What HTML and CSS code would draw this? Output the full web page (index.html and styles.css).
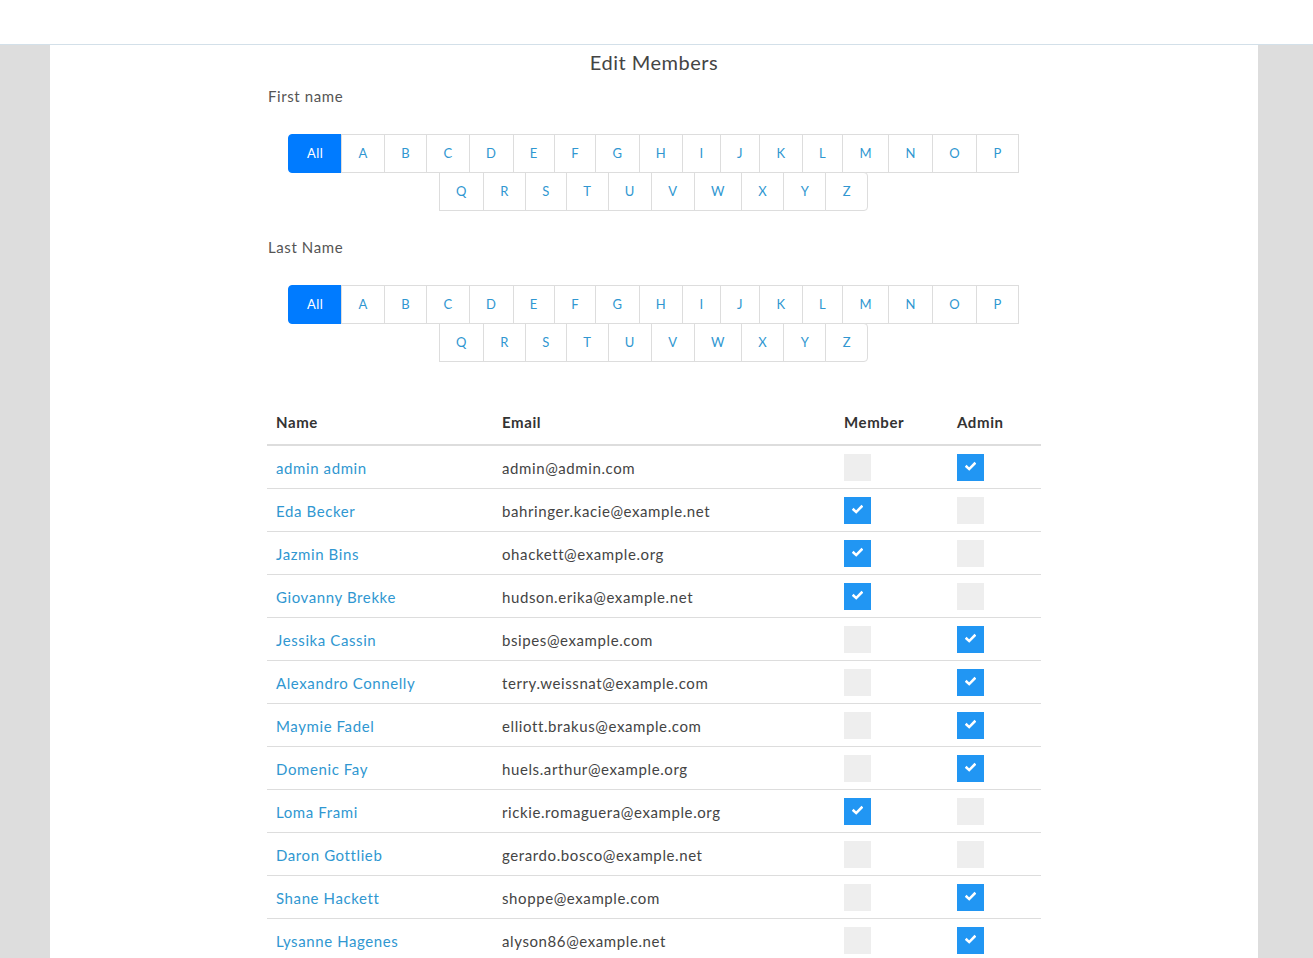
FILE: index.html
```html
<!DOCTYPE html>
<html>
<head>
<meta charset="utf-8">
<link rel="stylesheet" href="styles.css">
</head>
<body>
<div class="topbar"></div>
<div class="page">
  <div class="panel">
    <div class="content">
      <h3 class="title">Edit Members</h3>
      <div class="label">First name</div>
      <ul class="pager">
        <li class="active"><span>All</span></li>
        <li><a>A</a></li><li><a>B</a></li><li><a>C</a></li><li><a>D</a></li><li><a>E</a></li><li><a>F</a></li><li><a>G</a></li><li><a>H</a></li><li><a>I</a></li><li><a>J</a></li><li><a>K</a></li><li><a>L</a></li><li><a>M</a></li><li><a>N</a></li><li><a>O</a></li><li class="p-end"><a>P</a></li>
        <li class="break"></li>
        <li class="row2"><a>Q</a></li><li class="row2"><a>R</a></li><li class="row2"><a>S</a></li><li class="row2"><a>T</a></li><li class="row2"><a>U</a></li><li class="row2"><a>V</a></li><li class="row2"><a>W</a></li><li class="row2"><a>X</a></li><li class="row2"><a>Y</a></li><li class="row2 last"><a>Z</a></li>
      </ul>
      <div class="label label2">Last Name</div>
      <ul class="pager">
        <li class="active"><span>All</span></li>
        <li><a>A</a></li><li><a>B</a></li><li><a>C</a></li><li><a>D</a></li><li><a>E</a></li><li><a>F</a></li><li><a>G</a></li><li><a>H</a></li><li><a>I</a></li><li><a>J</a></li><li><a>K</a></li><li><a>L</a></li><li><a>M</a></li><li><a>N</a></li><li><a>O</a></li><li class="p-end"><a>P</a></li>
        <li class="break"></li>
        <li class="row2"><a>Q</a></li><li class="row2"><a>R</a></li><li class="row2"><a>S</a></li><li class="row2"><a>T</a></li><li class="row2"><a>U</a></li><li class="row2"><a>V</a></li><li class="row2"><a>W</a></li><li class="row2"><a>X</a></li><li class="row2"><a>Y</a></li><li class="row2 last"><a>Z</a></li>
      </ul>
      <table class="members">
        <thead>
          <tr><th class="c-name">Name</th><th class="c-email">Email</th><th class="c-mem">Member</th><th class="c-adm">Admin</th></tr>
        </thead>
        <tbody>
          <tr><td><a>admin admin</a></td><td>admin@admin.com</td><td><span class="cb"></span></td><td><span class="cb on"><svg viewBox="0 0 12 12"><path d="M1.8 6.2 L4.6 8.8 L10.4 2.8" /></svg></span></td></tr>
          <tr><td><a>Eda Becker</a></td><td>bahringer.kacie@example.net</td><td><span class="cb on"><svg viewBox="0 0 12 12"><path d="M1.8 6.2 L4.6 8.8 L10.4 2.8" /></svg></span></td><td><span class="cb"></span></td></tr>
          <tr><td><a>Jazmin Bins</a></td><td>ohackett@example.org</td><td><span class="cb on"><svg viewBox="0 0 12 12"><path d="M1.8 6.2 L4.6 8.8 L10.4 2.8" /></svg></span></td><td><span class="cb"></span></td></tr>
          <tr><td><a>Giovanny Brekke</a></td><td>hudson.erika@example.net</td><td><span class="cb on"><svg viewBox="0 0 12 12"><path d="M1.8 6.2 L4.6 8.8 L10.4 2.8" /></svg></span></td><td><span class="cb"></span></td></tr>
          <tr><td><a>Jessika Cassin</a></td><td>bsipes@example.com</td><td><span class="cb"></span></td><td><span class="cb on"><svg viewBox="0 0 12 12"><path d="M1.8 6.2 L4.6 8.8 L10.4 2.8" /></svg></span></td></tr>
          <tr><td><a>Alexandro Connelly</a></td><td>terry.weissnat@example.com</td><td><span class="cb"></span></td><td><span class="cb on"><svg viewBox="0 0 12 12"><path d="M1.8 6.2 L4.6 8.8 L10.4 2.8" /></svg></span></td></tr>
          <tr><td><a>Maymie Fadel</a></td><td>elliott.brakus@example.com</td><td><span class="cb"></span></td><td><span class="cb on"><svg viewBox="0 0 12 12"><path d="M1.8 6.2 L4.6 8.8 L10.4 2.8" /></svg></span></td></tr>
          <tr><td><a>Domenic Fay</a></td><td>huels.arthur@example.org</td><td><span class="cb"></span></td><td><span class="cb on"><svg viewBox="0 0 12 12"><path d="M1.8 6.2 L4.6 8.8 L10.4 2.8" /></svg></span></td></tr>
          <tr><td><a>Loma Frami</a></td><td>rickie.romaguera@example.org</td><td><span class="cb on"><svg viewBox="0 0 12 12"><path d="M1.8 6.2 L4.6 8.8 L10.4 2.8" /></svg></span></td><td><span class="cb"></span></td></tr>
          <tr><td><a>Daron Gottlieb</a></td><td>gerardo.bosco@example.net</td><td><span class="cb"></span></td><td><span class="cb"></span></td></tr>
          <tr><td><a>Shane Hackett</a></td><td>shoppe@example.com</td><td><span class="cb"></span></td><td><span class="cb on"><svg viewBox="0 0 12 12"><path d="M1.8 6.2 L4.6 8.8 L10.4 2.8" /></svg></span></td></tr>
          <tr><td><a>Lysanne Hagenes</a></td><td>alyson86@example.net</td><td><span class="cb"></span></td><td><span class="cb on"><svg viewBox="0 0 12 12"><path d="M1.8 6.2 L4.6 8.8 L10.4 2.8" /></svg></span></td></tr>
        </tbody>
      </table>
    </div>
  </div>
</div>
</body>
</html>
```
FILE: styles.css
```css
* { box-sizing: border-box; }
html, body { margin: 0; padding: 0; }
body {
  font-family: "Lato", "Open Sans", sans-serif;
  font-size: 15px;
  line-height: 1.4;
  letter-spacing: 0.6px;
  color: #555;
  background: #dddddd;
  overflow: hidden;
  height: 958px;
}
.topbar {
  height: 45px;
  background: #fff;
  border-bottom: 1px solid #d3e0e9;
}
.page {
  padding: 0 55px 0 50px;
}
.panel {
  background: #fff;
  min-height: 913px;
}
.content {
  width: 774px;
  margin: 0 auto;
  padding-top: 5px;
}
.title {
  margin: 0;
  text-align: center;
  font-size: 20px;
  font-weight: 400;
  line-height: 24px;
  color: #444;
  letter-spacing: 0.5px;
}
.label {
  margin-top: 12px;
  padding-left: 1px;
  line-height: 21px;
  color: #555;
}
.label2 { margin-top: 26px; }
.pager {
  list-style: none;
  margin: 27px 0 0;
  padding: 0;
  display: flex;
  flex-wrap: wrap;
  justify-content: center;
  font-size: 13px;
  letter-spacing: 0.5px;
}
.pager li { margin-left: -1px; }
.pager li.break {
  flex-basis: 100%;
  height: 0;
  margin: 0;
}
.pager li a, .pager li span {
  display: block;
  height: 39px;
  line-height: 37px;
  padding: 0 16.2px;
  border: 1px solid #ddd;
  color: #3097d1;
  background: #fff;
  text-align: center;
}
.pager li.active span {
  background: #007bff;
  border-color: #007bff;
  color: #fff;
  border-radius: 4px 0 0 4px;
  padding: 0 18px;
}
.pager li.row2 { margin-top: -1px; }
.pager li.last a { border-radius: 0 4px 4px 0; }
.members {
  width: 774px;
  margin-top: 44px;
  border-collapse: collapse;
}
.members th {
  text-align: left;
  font-weight: 700;
  color: #333;
  padding: 6px 9px 11px;
  line-height: 21px;
  border-bottom: 2px solid #ddd;
}
.c-name { width: 226px; }
.c-email { width: 342px; }
.c-mem { width: 113px; }
.c-adm { width: 93px; }
.members td {
  padding: 8px 9px 7px 9px;
  height: 42px;
  line-height: 22px;
  border-bottom: 1px solid #ddd;
  vertical-align: middle;
  color: #444;
}
.members td a { color: #3097d1; }
.cb {
  display: block;
  width: 27px;
  height: 27px;
  background: #eeeeee;
}
.cb.on {
  background: #2196f3;
  display: flex;
  align-items: center;
  justify-content: center;
}
.cb svg {
  width: 11px;
  height: 11px;
  margin-top: -3px;
}
.cb svg path {
  fill: none;
  stroke: #fff;
  stroke-width: 2.8;
  stroke-linecap: square;
}
```
